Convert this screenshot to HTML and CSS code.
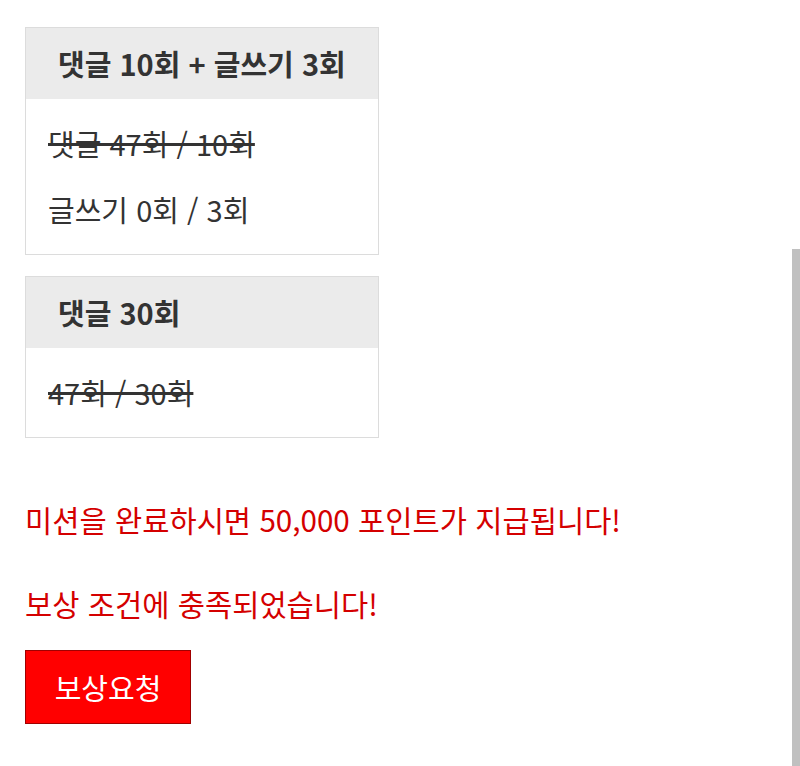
FILE: index.html
```html
<!DOCTYPE html>
<html lang="ko">
<head>
<meta charset="utf-8">
<link rel="stylesheet" href="styles.css">
</head>
<body>
<div class="page">
  <div class="mission">
    <div class="mission-head">댓글 10회 + 글쓰기 3회</div>
    <div class="mission-body">
      <p class="line done">댓글 47회 / 10회</p>
      <p class="line">글쓰기 0회 / 3회</p>
    </div>
  </div>
  <div class="mission">
    <div class="mission-head">댓글 30회</div>
    <div class="mission-body">
      <p class="line done">47회 / 30회</p>
    </div>
  </div>
  <p class="notice first">미션을 완료하시면 50,000 포인트가 지급됩니다!</p>
  <p class="notice">보상 조건에 충족되었습니다!</p>
  <button class="reward-btn">보상요청</button>
</div>
<div class="scrollbar"></div>
</body>
</html>
```
FILE: styles.css
```css
html, body {
  margin: 0;
  padding: 0;
  background: #fff;
}
body {
  font-family: "Noto Sans CJK KR", "Noto Sans", sans-serif;
  color: #333;
  position: relative;
  height: 766px;
  overflow: hidden;
}
.page {
  padding: 27px 0 0 25px;
  display: flex;
  flex-direction: column;
  align-items: flex-start;
}
.mission {
  width: 352px;
  border: 1px solid #dcdcdc;
  margin-bottom: 21px;
}
.mission-head {
  background: #ebebeb;
  height: 71px;
  line-height: 71px;
  padding-left: 32px;
  font-size: 29px;
  font-weight: bold;
  color: #333;
}
.mission-body {
  padding: 24px 22px 25px;
  display: flex;
  flex-direction: column;
  gap: 26px;
}
.line {
  margin: 0;
  font-size: 29px;
  line-height: 40px;
  color: #333;
}
.line.done {
  text-decoration: line-through;
  text-decoration-thickness: 3px;
}
.notice {
  margin: 0;
  font-size: 29.6px;
  line-height: 40px;
  color: #d40000;
}
.notice.first {
  margin-top: 41px;
}
.notice + .notice {
  margin-top: 44px;
}
.reward-btn {
  margin-top: 26px;
  width: 166px;
  height: 74px;
  background: #ff0000;
  border: 1px solid #a00000;
  color: #fff;
  font-family: inherit;
  font-size: 29px;
  padding: 0;
}
.scrollbar {
  position: absolute;
  right: 0;
  top: 249px;
  width: 8px;
  bottom: 0;
  background: #c0c0c0;
}
```
